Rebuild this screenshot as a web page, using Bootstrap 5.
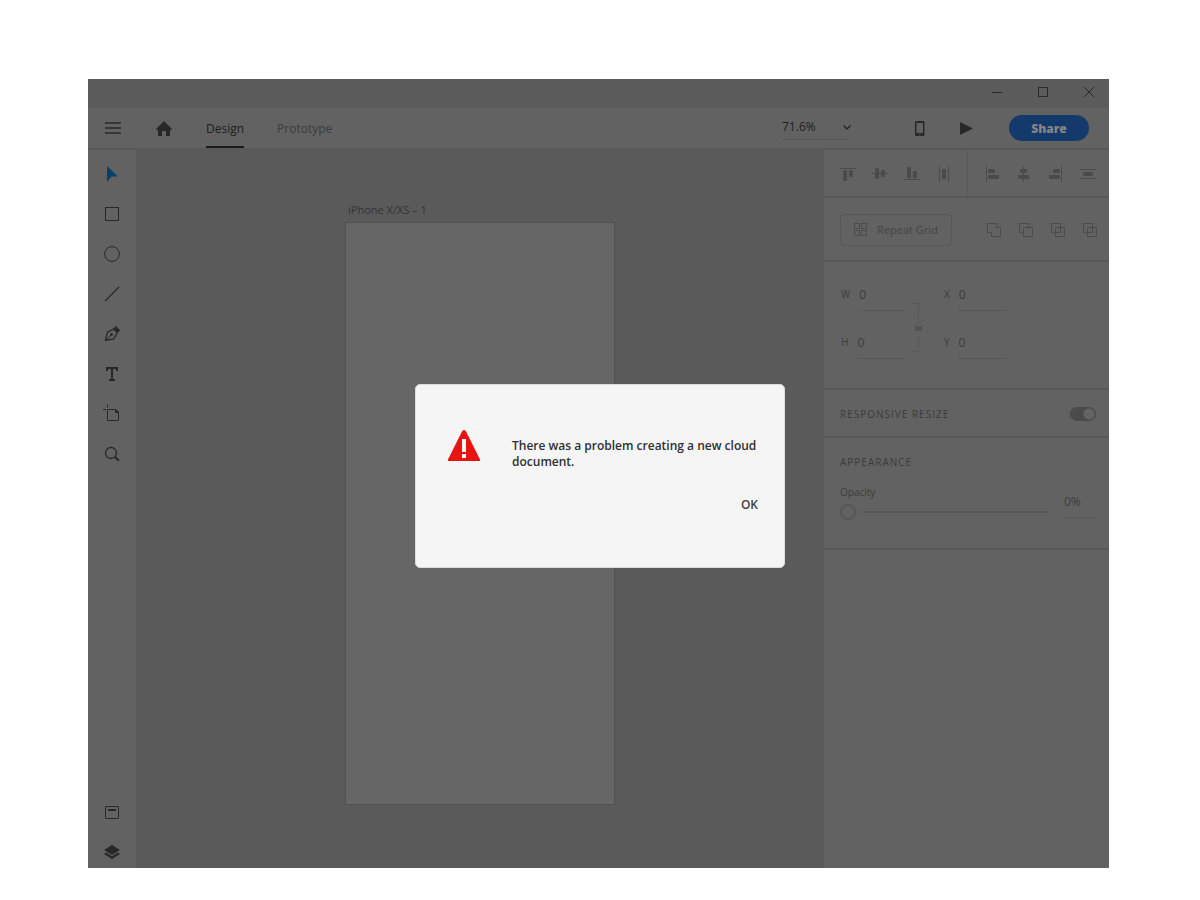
<!DOCTYPE html>
<html lang="en">
<head>
<meta charset="utf-8">
<meta name="viewport" content="width=device-width, initial-scale=1">
<title>Design editor</title>
<link href="https://cdn.jsdelivr.net/npm/bootstrap@5.3.0/dist/css/bootstrap.min.css" rel="stylesheet">
<style>
:root{--bar:#626262;--line:#595959;--canvas:#5a5a5a;--ink:#282828;--dim:#3c3c3c;--off:#4b4b4b}
body{font-family:"Open Sans","Noto Sans",sans-serif;font-size:12px;line-height:16px;color:var(--dim);background:#fff;padding:79px 91px 32px 88px;min-height:100vh}
svg{display:block;flex:none}
.app{background:var(--bar);min-height:calc(100vh - 111px)}
.titlebar{background:#5b5b5b;height:29px;gap:16px;padding-right:5px}
.plain{background:none;border:0;padding:0;color:inherit;display:flex;align-items:center;justify-content:center}
.winbtn{width:30px;height:26px;color:var(--ink)}
.toolbar{height:42px;border-bottom:2px solid var(--line);padding:0 20px 0 9px;color:var(--ink)}
.iconbtn{width:32px;height:32px}
.gohome{margin-left:19px}
.modes{gap:33px;margin-left:26px}
.modes a{height:40px;line-height:42px;font-size:12px;color:var(--dim);text-decoration:none;border-bottom:2px solid transparent}
.modes a.active{color:#1e1e1e;border-color:#1a1c19}
.zoomer{width:70px;border-bottom:1px solid var(--line);margin-right:52px;height:24px}
.zoomer select{appearance:none;background:none;border:0;padding:0 0 2px;flex:1;min-width:0;color:#1e1e1e;height:22px;font-size:12px}
.play{margin-left:14px}
.share{width:80px;height:26px;border:0;border-radius:13px;background:#14396b;color:#858585;font-size:12px;line-height:28px;font-weight:800;margin-left:27px}
.tools{width:48px;padding:8px 0 0;gap:8px;color:var(--ink)}
.canvas{background:var(--canvas);padding-top:52px}
.board{width:270px}
.board figcaption{font-size:11px;padding-left:3px;margin-bottom:4px;color:#343434}
.sheet{background:#666;border:1px solid #505050;height:583px}
.panel{width:285px}
.panel>section{border-bottom:2px solid var(--line)}
.alignrow{height:48px;padding-left:8px;color:var(--off)}
.split{width:1px;background:var(--line);margin:0 8px 0 7px}
.ops{height:64px;padding:16px 3px 0 16px;color:var(--off)}
.repeat{width:112px;height:32px;border:1px solid var(--line);border-radius:4px;gap:9px;font-size:11px;color:#454545}
.repeat svg{color:var(--off)}
.size{height:128px;padding:24px 16px 0 17px;color:var(--dim)}
.fields{gap:23px}
.wide{width:63px}
.wider{width:67px}
.fld{height:25px;gap:9px}
.fld label{font-size:10px}
.fld input,.pct{appearance:none;background:none;border:0;border-bottom:1px solid var(--line);border-radius:0;padding:0 0 8px;height:25px;min-width:0;color:var(--dim);font-size:12px;line-height:16px}
.fld input{flex:1}
.cap{font-size:10px;letter-spacing:1px;margin:0;line-height:16px;font-weight:400}
.resp{height:48px;padding:1px 13px 0 16px}
.form-switch .toggle{width:26px;height:14px;margin:0;float:none;border:0;background-color:var(--off);background-size:14px;box-shadow:none;background-image:radial-gradient(circle,#646464 5px,transparent 6px)!important}
.look{height:112px;padding:16px 13px 0 16px}
.opacrow{margin-top:14px}
.opac{font-size:10px;line-height:16px;margin-bottom:4px;display:block}
.slide{appearance:none;display:block;width:208px;height:16px;margin:0;background:linear-gradient(var(--line),var(--line)) 20px 7px/188px 2px no-repeat}
.slide::-webkit-slider-thumb{appearance:none;width:16px;height:16px;border:2px solid #575757;border-radius:50%;background:transparent}
.slide::-moz-range-thumb{width:12px;height:12px;border:2px solid #575757;border-radius:50%;background:transparent}
.pct{width:32px;margin-top:9px}
.veil{padding-top:52px}
.alertbox{width:370px;height:184px;background:#f5f5f5;border:1px solid #dcdcdc;border-radius:5px;padding:44px 26px 0 31px;color:#3c3c3c}
.alertbox p{font-size:12px;line-height:16px;font-weight:600;margin:9px -8px 27px 31px;color:#303030}
.okbtn{font-weight:600;color:#404040;font-size:12px;line-height:16px}
</style>
</head>
<body>
<main class="app d-flex flex-column">
  <div class="titlebar d-flex justify-content-end">
    <button class="plain winbtn" aria-label="Minimize"><svg width="12" height="12"><path d="M1 6.500h10" stroke="currentColor"/></svg></button>
    <button class="plain winbtn" aria-label="Maximize"><svg width="12" height="12" fill="none"><path d="M1.500 1.500h9v9h-9z" stroke="currentColor"/></svg></button>
    <button class="plain winbtn" aria-label="Close"><svg width="12" height="12"><path d="M1 1l10 10M11 1L1 11" stroke="currentColor"/></svg></button>
  </div>
  <header class="toolbar d-flex align-items-center">
    <button class="plain iconbtn" aria-label="Menu"><svg width="16" height="12"><path d="M0 1h16M0 6h16M0 11h16" stroke="currentColor" stroke-width="1.700"/></svg></button>
    <button class="plain iconbtn gohome" aria-label="Home"><svg width="16" height="15" fill="currentColor"><path d="M8 0l8 8-1 1h-1v6H10V10H6v5H2V9H1L0 8z"/></svg></button>
    <nav class="modes d-flex"><a class="active" href="#">Design</a><a href="#">Prototype</a></nav>
    <div class="zoomer d-flex align-items-center ms-auto">
      <select aria-label="Zoom level"><option>71.6%</option></select>
      <svg width="10" height="7" fill="none"><path d="M1.500 1.500L5 5l3.500-3.500" stroke="currentColor" stroke-width="1.500"/></svg>
    </div>
    <button class="plain iconbtn" aria-label="Preview on device"><svg width="10" height="15"><path fill="currentColor" fill-rule="evenodd" d="M1.500 0h6.500q1.500 0 1.500 1.500v12q0 1.500-1.500 1.500H1.500Q0 15 0 13.500v-12Q0 0 1.500 0zM1.500 2v10H8V2zM4 13v1h1.500v-1z"/></svg></button>
    <button class="plain iconbtn play" aria-label="Play"><svg width="13" height="13"><path d="M0 0l13 6.500L0 13z" fill="currentColor"/></svg></button>
    <button class="share p-0">Share</button>
  </header>
  <div class="d-flex flex-grow-1">
    <aside class="tools d-flex flex-column align-items-center" aria-label="Tools">
      <button class="plain iconbtn" aria-label="Select"><svg width="16" height="16"><path d="M3 0l11 10.500H7.500L3 16z" fill="#07416b"/></svg></button>
      <button class="plain iconbtn" aria-label="Rectangle"><svg width="16" height="16" fill="none"><rect x="1.500" y="1.500" width="13" height="13" stroke="currentColor"/></svg></button>
      <button class="plain iconbtn" aria-label="Ellipse"><svg width="16" height="16" fill="none"><circle cx="8" cy="8" r="7.400" stroke="currentColor"/></svg></button>
      <button class="plain iconbtn" aria-label="Line"><svg width="16" height="16"><path d="M1 15L15 1" stroke="currentColor" stroke-width="1.200"/></svg></button>
      <button class="plain iconbtn" aria-label="Pen"><svg width="16" height="16" fill="none" stroke="currentColor"><path d="M1.500 14.500L3.200 6.500 9.500 3l3.800 3.800L9.700 13z" stroke-width="1.300"/><path d="M1.500 14.500L7 9"/><circle cx="7.500" cy="8.600" r="1" fill="currentColor"/><path d="M10.700 1.300l4.300 4.300" stroke-width="3.400"/></svg></button>
      <button class="plain iconbtn" aria-label="Text"><svg width="16" height="16"><path d="M3 5V2h10v3M8 2v12M5 14h6" fill="none" stroke="currentColor" stroke-width="2"/></svg></button>
      <button class="plain iconbtn" aria-label="Artboard"><svg width="20" height="20" fill="none" stroke="currentColor"><path d="M5.500.500v3M1 5.500h3M5.500 5.500h8.500l2.500 2.500v8.500h-11z"/><path d="M13.500 5.500v3h3z" fill="currentColor"/></svg></button>
      <button class="plain iconbtn" aria-label="Zoom"><svg width="16" height="16" fill="none" stroke="currentColor"><circle cx="7" cy="7" r="5.500" stroke-width="1.300"/><path d="M11 11l3.800 3.800" stroke-width="2.200"/></svg></button>
      <button class="plain iconbtn mt-auto" aria-label="Assets"><svg width="16" height="16" fill="none" stroke="currentColor"><rect x="1.500" y="2.500" width="13" height="12" rx=".5"/><path d="M4 6h8" stroke-width="2"/></svg></button>
      <button class="plain iconbtn" aria-label="Layers"><svg width="16" height="16" fill="currentColor"><path d="M8 1l8 5-8 5-8-5zM2 8.600l6 3.600 6-3.600 2 1.400-8 5-8-5z"/></svg></button>
    </aside>
    <div class="canvas flex-grow-1 d-flex justify-content-center">
      <figure class="board m-0"><figcaption>iPhone X/XS – 1</figcaption><div class="sheet"></div></figure>
    </div>
    <aside class="panel" aria-label="Properties">
      <section class="alignrow d-flex">
        <div class="d-flex align-items-center">
          <button class="plain iconbtn" aria-label="Align top"><svg width="24" height="24" fill="currentColor"><path d="M4 7h16v1H4z"/><rect x="7" y="9" width="4" height="11" rx="1"/><rect x="13" y="9" width="4" height="7" rx="1"/></svg></button>
          <button class="plain iconbtn" aria-label="Align middle"><svg width="24" height="24" fill="currentColor"><path d="M4 12h16v1H4z"/><rect x="7" y="7" width="4" height="11" rx="1"/><rect x="13" y="9" width="4" height="7" rx="1"/></svg></button>
          <button class="plain iconbtn" aria-label="Align bottom"><svg width="24" height="24" fill="currentColor"><path d="M4 18h16v1H4z"/><rect x="7" y="6" width="4" height="11" rx="1"/><rect x="13" y="10" width="4" height="7" rx="1"/></svg></button>
          <button class="plain iconbtn" aria-label="Distribute horizontally"><svg width="24" height="24" fill="currentColor"><path d="M7 5h1v16H7zM16 5h1v16h-1z"/><rect x="10" y="8" width="4" height="10" rx="1"/></svg></button>
        </div>
        <div class="split"></div>
        <div class="d-flex align-items-center">
          <button class="plain iconbtn" aria-label="Align left"><svg width="24" height="24" fill="currentColor"><path d="M6 5h1v16H6z"/><rect x="8" y="8" width="7" height="4" rx="1"/><rect x="8" y="14" width="11" height="4" rx="1"/></svg></button>
          <button class="plain iconbtn" aria-label="Align center"><svg width="24" height="24" fill="currentColor"><path d="M11 5h1v16h-1z"/><rect x="8" y="8" width="7" height="4" rx="1"/><rect x="6" y="14" width="11" height="4" rx="1"/></svg></button>
          <button class="plain iconbtn" aria-label="Align right"><svg width="24" height="24" fill="currentColor"><path d="M17 5h1v16h-1z"/><rect x="9" y="8" width="7" height="4" rx="1"/><rect x="5" y="14" width="11" height="4" rx="1"/></svg></button>
          <button class="plain iconbtn" aria-label="Distribute vertically"><svg width="24" height="24" fill="currentColor"><path d="M4 8h16v1H4zM4 17h16v1H4z"/><rect x="7" y="11" width="10" height="4" rx="1"/></svg></button>
        </div>
      </section>
      <section class="ops d-flex justify-content-between">
        <button class="plain repeat"><svg width="14" height="14" fill="none" stroke="currentColor"><path d="M.500.500h5v5h-5zM7.500.500h5v5h-5zM.500 7.500h5v5h-5zM7.500 7.500h5v5h-5z"/></svg>Repeat Grid</button>
        <div class="d-flex">
          <button class="plain iconbtn" aria-label="Add"><svg width="24" height="24" fill="none" stroke="currentColor"><path d="M5.500 5.500h9v4h4v9h-9v-4h-4z"/></svg></button>
          <button class="plain iconbtn" aria-label="Subtract"><svg width="24" height="24" fill="none" stroke="currentColor"><path d="M9.500 9.500h9v9h-9zM9.500 14.500h-4v-9h9v4"/></svg></button>
          <button class="plain iconbtn" aria-label="Intersect"><svg width="24" height="24" fill="none" stroke="currentColor"><path d="M9.500 9.500h9v9h-9zM5.500 5.500h9v9h-9z"/></svg></button>
          <button class="plain iconbtn" aria-label="Exclude overlap"><svg width="24" height="24" fill="none" stroke="currentColor"><path d="M9.500 9.500h9v9h-9zM5.500 5.500h9v9h-9z"/></svg></button>
        </div>
      </section>
      <section class="size d-flex">
        <div class="fields wide d-flex flex-column">
          <div class="fld d-flex"><label for="w">W</label><input id="w" value="0"></div>
          <div class="fld d-flex"><label for="h">H</label><input id="h" value="0"></div>
        </div>
        <svg class="mt-3 ms-2" width="12" height="54" fill="none" stroke="#595959"><path d="M0 1.500h6.500V17M6.500 34v15.500H0"/><path d="M3.500 24v-2q0-2 2.500-2t2.500 1.500"/><path d="M3 24h7v5H3z" fill="#525252" stroke="none"/></svg>
        <div class="fields wider d-flex flex-column ms-3 ps-1">
          <div class="fld d-flex"><label for="x">X</label><input id="x" value="0"></div>
          <div class="fld d-flex"><label for="y">Y</label><input id="y" value="0"></div>
        </div>
      </section>
      <section class="resp form-switch d-flex align-items-center justify-content-between">
        <label class="cap" for="rr">RESPONSIVE RESIZE</label>
        <input class="form-check-input toggle" type="checkbox" role="switch" id="rr" checked>
      </section>
      <section class="look">
        <h2 class="cap">APPEARANCE</h2>
        <div class="opacrow d-flex justify-content-between">
          <div><label class="opac" for="op">Opacity</label><input class="slide" id="op" type="range" value="0"></div>
          <input class="pct" value="0%" aria-label="Opacity value">
        </div>
      </section>
    </aside>
  </div>
</main>
<div class="veil position-fixed top-0 start-0 w-100 h-100 d-flex align-items-center justify-content-center">
  <div class="alertbox" role="alertdialog" aria-labelledby="msg">
    <div class="d-flex">
      <svg width="34" height="34"><path d="M17 1q1.500 0 2.300 2L33 30.500V32H1v-1.500L14.700 3Q15.500 1 17 1z" fill="#e81313"/><path d="M15 10h4v13h-4zM15 25h4v4h-4z" fill="#f5f5f5"/></svg>
      <p id="msg">There was a problem creating a new cloud document.</p>
    </div>
    <button class="plain okbtn ms-auto">OK</button>
  </div>
</div>
<script src="https://cdn.jsdelivr.net/npm/bootstrap@5.3.0/dist/js/bootstrap.bundle.min.js"></script>
</body>
</html>
